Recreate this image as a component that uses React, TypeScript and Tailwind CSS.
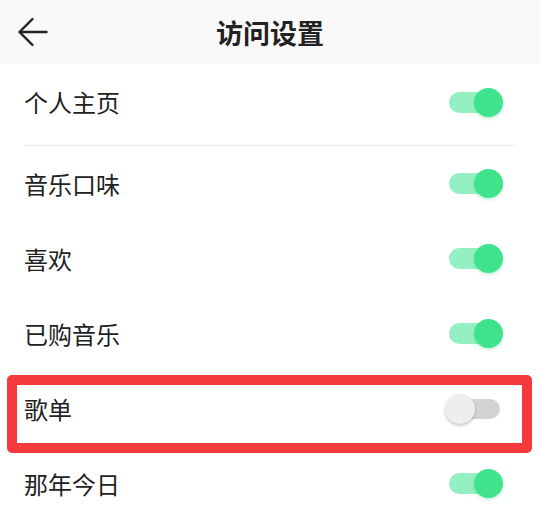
import React from "react";

type Item = { label: string; on: boolean; marked?: boolean };

const items: Item[] = [
  { label: "音乐口味", on: true },
  { label: "喜欢", on: true },
  { label: "已购音乐", on: true },
  { label: "歌单", on: false, marked: true },
  { label: "那年今日", on: true },
];

function Toggle({ on }: { on: boolean }) {
  return (
    <div className="relative w-[58px] h-[29px] shrink-0">
      <div
        className={
          on
            ? "absolute left-[4px] top-[4px] w-[51px] h-[21px] rounded-full bg-[#94efc2]"
            : "absolute left-[4px] top-[5px] w-[51px] h-[20px] rounded-full bg-[#d3d3d3]"
        }
      />
      <div
        className={
          on
            ? "absolute right-0 top-0 w-[29px] h-[29px] rounded-full bg-[#3fe38c] shadow-[0_2px_3px_rgba(40,200,110,0.25)]"
            : "absolute left-0 top-0 w-[30px] h-[30px] rounded-full bg-[#eeeeee] shadow-[0_2px_3px_rgba(0,0,0,0.22)]"
        }
      />
    </div>
  );
}

function Row({ item }: { item: Item }) {
  return (
    <div className="relative h-[75px] flex items-center justify-between pl-[24px] pr-[37px]">
      <span className="text-[24px] leading-none text-[#222222]">{item.label}</span>
      <Toggle on={item.on} />
      {item.marked && (
        <div className="absolute left-[7px] right-[8px] top-[4px] bottom-[-7px] border-[10px] border-[#f43a3a] rounded-[5px]" />
      )}
    </div>
  );
}

export default function App() {
  return (
    <div
      className="w-[540px] h-[520px] overflow-hidden bg-white"
      style={{ fontFamily: '"Noto Sans CJK SC", "Noto Sans", sans-serif' }}
    >
      <header className="h-[64px] bg-[#f9f9f9] grid grid-cols-[1fr_auto_1fr] items-center">
        <div className="pl-[17px] flex items-center">
          <svg width="32" height="32" viewBox="0 0 32 32" fill="none">
            <path
              d="M2.5 13.5 H29.5 M15.5 0.5 L2.5 13.5 L15.5 26.5"
              stroke="#222222"
              strokeWidth="2.4"
              strokeLinecap="round"
              strokeLinejoin="round"
              transform="translate(0 2.5)"
            />
          </svg>
        </div>
        <h1 className="text-[27px] font-bold leading-none text-[#222222]">访问设置</h1>
        <div />
      </header>

      <div className="h-[76px] flex items-center justify-between pl-[24px] pr-[37px]">
        <span className="text-[24px] leading-none text-[#222222]">个人主页</span>
        <Toggle on />
      </div>
      <div className="mt-[5px] ml-[24px] mr-[24px] h-px bg-[#ebebeb]" />

      {items.map((it) => (
        <Row key={it.label} item={it} />
      ))}
    </div>
  );
}
